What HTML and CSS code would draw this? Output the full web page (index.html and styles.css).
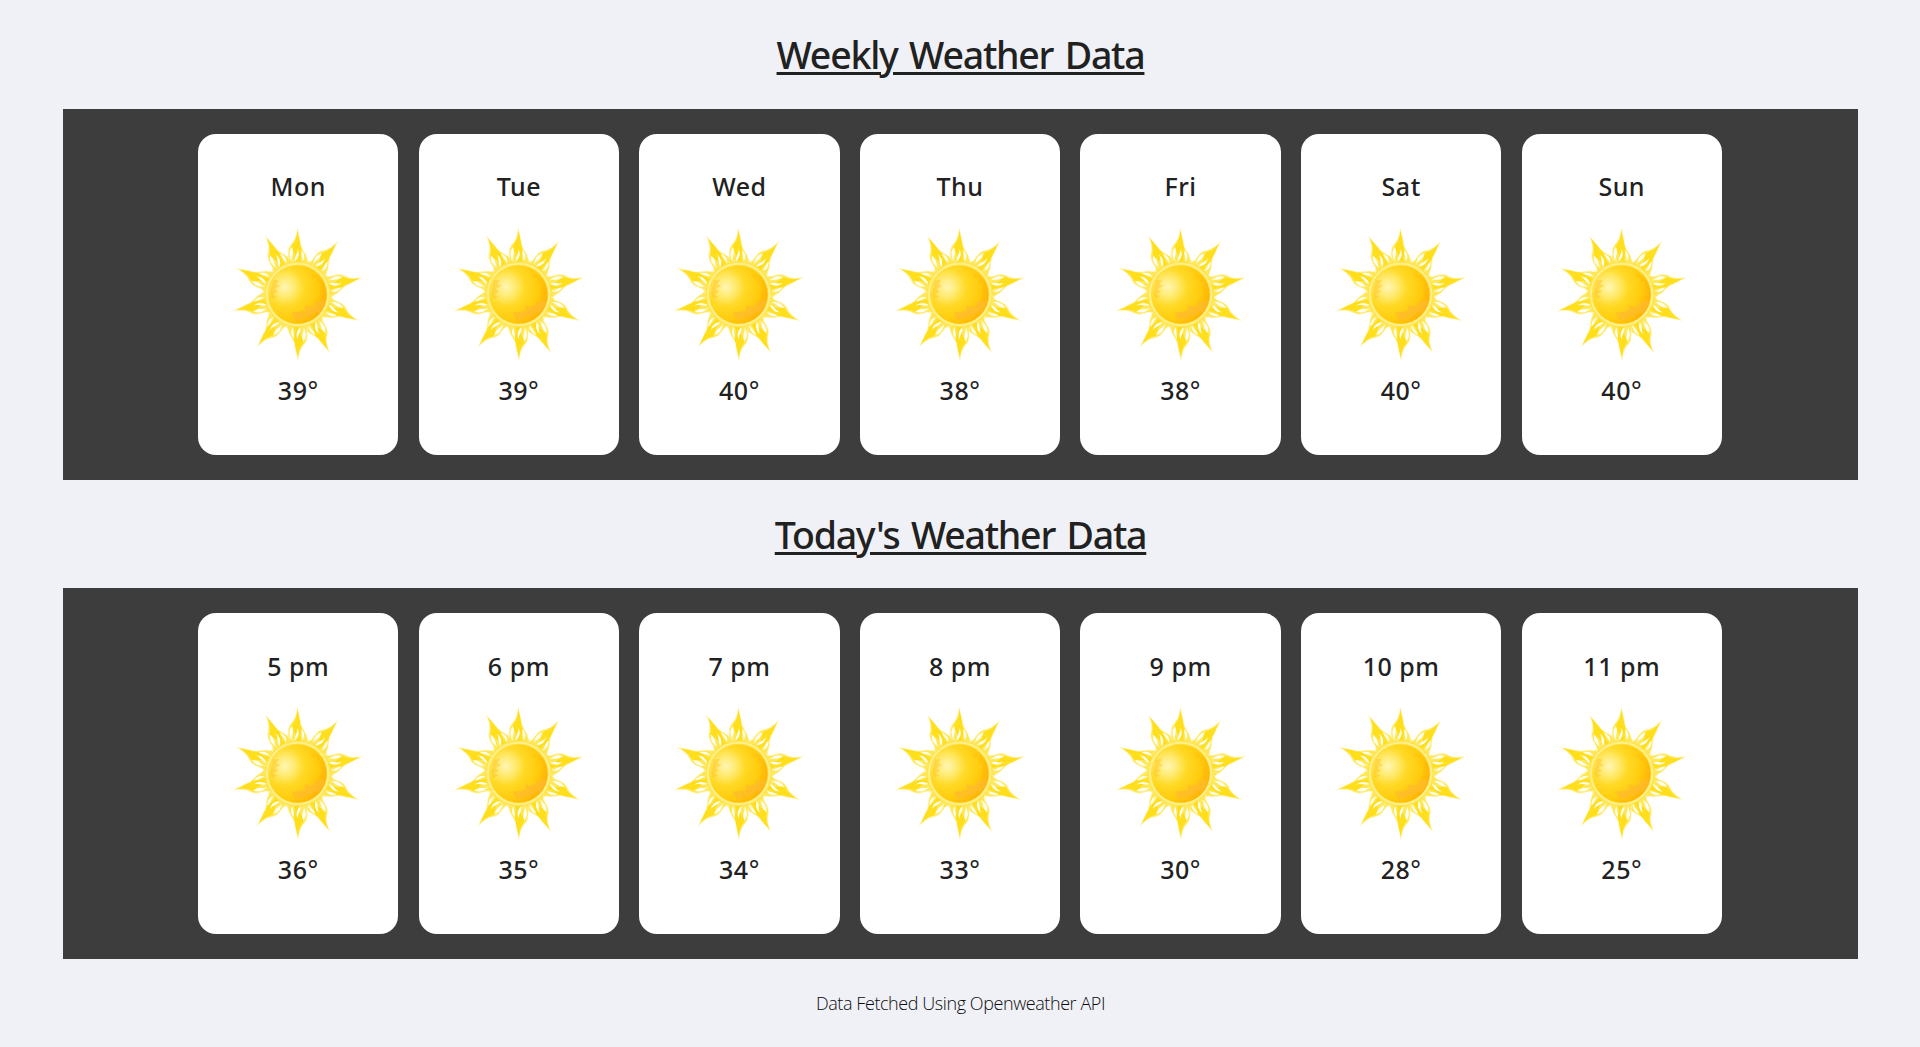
FILE: index.html
```
<!DOCTYPE html>
<html lang="en">
<head>
<meta charset="utf-8">
<title>Weather Data</title>
<link rel="stylesheet" href="styles.css">
</head>
<body>
<svg class="defs" aria-hidden="true">
  <defs>
    <radialGradient id="disc" cx="0.28" cy="0.37" r="0.75">
      <stop offset="0" stop-color="#fff6b4"/>
      <stop offset="0.2" stop-color="#ffec78"/>
      <stop offset="0.45" stop-color="#ffd924"/>
      <stop offset="0.78" stop-color="#ffca0c"/>
      <stop offset="1" stop-color="#ffb205"/>
    </radialGradient>
    <g id="ray">
      <path class="flame" d="M234 40C231 66 225 78 214 90C204 103 207 118 207 132L194 160H278L264 132C262 117 249 106 245 92C243 78 238 62 234 40Z"/>
      <path class="core" d="M234 46C233 68 228 80 219 92C213 106 238 116 224 144H248C236 126 253 112 243 92C242 80 238 64 234 46Z"/>
      <path class="slit" d="M218 97C207 110 209 122 217 139C214 126 226 118 218 97Z"/>
      <path class="slit" d="M234 101C238 113 224 124 227 140C238 128 242 116 234 101Z"/>
      <path class="slit" d="M247 106C244 118 251 126 249 139C258 130 256 117 247 106Z"/>
    </g>
    <symbol id="sun" viewBox="-4 0 480 480">
      <use href="#ray"/>
      <use href="#ray" transform="rotate(37.3 235 238)"/>
      <use href="#ray" transform="rotate(75.8 235 238)"/>
      <use href="#ray" transform="rotate(113.6 235 238)"/>
      <use href="#ray" transform="rotate(151.5 235 238)"/>
      <use href="#ray" transform="rotate(180 235 238)"/>
      <use href="#ray" transform="rotate(217.9 235 238)"/>
      <use href="#ray" transform="rotate(255.8 235 238)"/>
      <use href="#ray" transform="rotate(293.3 235 238)"/>
      <use href="#ray" transform="rotate(331.4 235 238)"/>
      <circle class="halo" cx="235" cy="238" r="99"/>
      <circle class="ring" cx="235" cy="238" r="92"/>
      <circle cx="235" cy="239" r="87" fill="url(#disc)"/>
      <path class="patch" d="M317 253 304 260 290 259 284 271 271 275 256 271 257 286 243 290 217 293 230 318 241 308 250 315 261 302 273 305 286 291 300 293 312 276Z"/>
      <path class="edge" d="M280 177 277 190 292 187 292 205 306 197 303 222 304 247 289 253 309 257 320 241C321 211 304 187 280 177Z"/>
      <path class="edge" d="M161 196 179 195 171 208 184 212 166 222 177 229 160 239 174 244 158 252 153 235Z"/>
    </symbol>
  </defs>
</svg>
<main class="page">
  <h1 class="title">Weekly Weather Data</h1>
  <section class="panel">
    <article class="card"><h2 class="label">Mon</h2><svg class="sun"><use href="#sun"/></svg><p class="temp">39<span class="deg">°</span></p></article>
    <article class="card"><h2 class="label">Tue</h2><svg class="sun"><use href="#sun"/></svg><p class="temp">39<span class="deg">°</span></p></article>
    <article class="card"><h2 class="label">Wed</h2><svg class="sun"><use href="#sun"/></svg><p class="temp">40<span class="deg">°</span></p></article>
    <article class="card"><h2 class="label">Thu</h2><svg class="sun"><use href="#sun"/></svg><p class="temp">38<span class="deg">°</span></p></article>
    <article class="card"><h2 class="label">Fri</h2><svg class="sun"><use href="#sun"/></svg><p class="temp">38<span class="deg">°</span></p></article>
    <article class="card"><h2 class="label">Sat</h2><svg class="sun"><use href="#sun"/></svg><p class="temp">40<span class="deg">°</span></p></article>
    <article class="card"><h2 class="label">Sun</h2><svg class="sun"><use href="#sun"/></svg><p class="temp">40<span class="deg">°</span></p></article>
  </section>
  <h1 class="title title-today">Today's Weather Data</h1>
  <section class="panel panel-today">
    <article class="card"><h2 class="label">5 pm</h2><svg class="sun"><use href="#sun"/></svg><p class="temp">36<span class="deg">°</span></p></article>
    <article class="card"><h2 class="label">6 pm</h2><svg class="sun"><use href="#sun"/></svg><p class="temp">35<span class="deg">°</span></p></article>
    <article class="card"><h2 class="label">7 pm</h2><svg class="sun"><use href="#sun"/></svg><p class="temp">34<span class="deg">°</span></p></article>
    <article class="card"><h2 class="label">8 pm</h2><svg class="sun"><use href="#sun"/></svg><p class="temp">33<span class="deg">°</span></p></article>
    <article class="card"><h2 class="label">9 pm</h2><svg class="sun"><use href="#sun"/></svg><p class="temp">30<span class="deg">°</span></p></article>
    <article class="card"><h2 class="label">10 pm</h2><svg class="sun"><use href="#sun"/></svg><p class="temp">28<span class="deg">°</span></p></article>
    <article class="card"><h2 class="label">11 pm</h2><svg class="sun"><use href="#sun"/></svg><p class="temp">25<span class="deg">°</span></p></article>
  </section>
  <footer class="credit">Data Fetched Using Openweather API</footer>
</main>
</body>
</html>
```
FILE: styles.css
```
* { box-sizing: border-box; margin: 0; }
body {
  background: #f0f1f6;
  color: #212121;
  font-family: "Noto Sans", "Open Sans", sans-serif;
}
.defs { display: block; width: 0; height: 0; }
.page { height: 1047px; padding: 0 62px 0 63px; overflow: hidden; }
.title {
  height: 109px;
  padding-top: 28px;
  font-size: 37.5px;
  font-weight: 500;
  line-height: 54px;
  letter-spacing: -1.24px;
  word-spacing: 3px;
  text-align: center;
  text-decoration: underline;
  text-decoration-thickness: 3px;
  text-underline-offset: 3px;
}
.title-today { height: 108px; }
.panel {
  display: flex;
  justify-content: center;
  gap: 20.4px;
  height: 371px;
  padding: 25px 1px 25px 0;
  background: #3d3d3d;
}
.card {
  display: flex;
  flex-direction: column;
  align-items: center;
  width: 200.2px;
  height: 321px;
  padding-top: 34px;
  border-radius: 18px;
  background: #fff;
}
.label, .temp {
  font-size: 25px;
  font-weight: 500;
  line-height: 36px;
  letter-spacing: 0.5px;
}
.panel-today .label { padding-top: 1px; margin-bottom: -1px; }
.sun { width: 160px; height: 160px; margin-top: 11px; }
.temp { margin-top: -3px; }
.deg { font-weight: 400; }
.flame { fill: #ffe858; stroke: #fff6bf; stroke-width: 2; }
.core { fill: #ffde1c; }
.slit { fill: #fffdf2; }
.halo { fill: #ffe450; }
.ring { fill: #ffdf3b; stroke: #fff08c; stroke-width: 6; }
.patch { fill: #ffb92e; opacity: 0.75; }
.edge { fill: #ffb70c; opacity: 0.35; }
.credit {
  padding-top: 31px;
  color: #0c0c0c;
  font-family: "Open Sans", "Noto Sans", sans-serif;
  font-size: 18px;
  font-weight: 300;
  line-height: 26px;
  letter-spacing: -0.42px;
  text-align: center;
}
```
